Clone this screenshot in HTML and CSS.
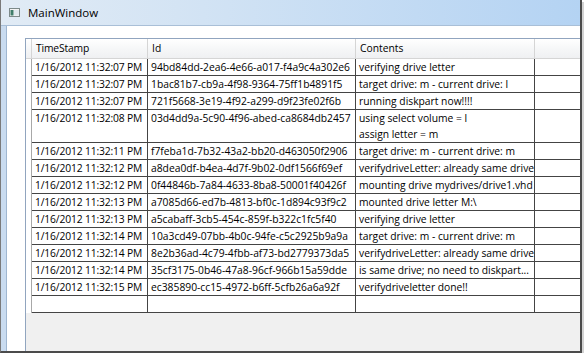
FILE: index.html
```html
<!DOCTYPE html>
<html lang="en">
<head>
  <meta charset="UTF-8">
  <title>MainWindow</title>
  <link rel="stylesheet" href="styles.css">
</head>
<body>

  <div class="window">
    <div class="titlebar">
      <svg class="app-icon" width="11" height="9" viewBox="0 0 11 9">
        <rect x="0.5" y="0.5" width="10" height="8" fill="#f4f4f4" stroke="#7d8a8a"/>
        <rect x="1.5" y="2" width="3" height="5.5" fill="#3f7d6b"/>
        <rect x="5" y="2" width="5" height="5.5" fill="#dfe8ee"/>
      </svg>
      <span class="title">MainWindow</span>
    </div>

    <div class="body">
      <div class="frame"></div>
      <div class="client">
        <div class="grid">
          <div class="row head">
            <div class="cell rh"></div>
            <div class="cell">TimeStamp</div>
            <div class="cell">Id</div>
            <div class="cell">Contents</div>
            <div class="cell fill"></div>
          </div>
          <div id="rows"></div>
        </div>
      </div>
    </div>
  </div>

  <script>
    const log = [
      ['1/16/2012 11:32:07 PM', '94bd84dd-2ea6-4e66-a017-f4a9c4a302e6', 'verifying drive letter'],
      ['1/16/2012 11:32:07 PM', '1bac81b7-cb9a-4f98-9364-75ff1b4891f5', 'target drive: m - current drive: l'],
      ['1/16/2012 11:32:07 PM', '721f5668-3e19-4f92-a299-d9f23fe02f6b', 'running diskpart now!!!!'],
      ['1/16/2012 11:32:08 PM', '03d4dd9a-5c90-4f96-abed-ca8684db2457', 'using select volume = l\nassign letter = m'],
      ['1/16/2012 11:32:11 PM', 'f7feba1d-7b32-43a2-bb20-d463050f2906', 'target drive: m - current drive: m'],
      ['1/16/2012 11:32:12 PM', 'a8dea0df-b4ea-4d7f-9b02-0df1566f69ef', 'verifydriveLetter: already same drive'],
      ['1/16/2012 11:32:12 PM', '0f44846b-7a84-4633-8ba8-50001f40426f', 'mounting drive mydrives/drive1.vhd'],
      ['1/16/2012 11:32:13 PM', 'a7085d66-ed7b-4813-bf0c-1d894c93f9c2', 'mounted drive letter M:\\'],
      ['1/16/2012 11:32:13 PM', 'a5cabaff-3cb5-454c-859f-b322c1fc5f40', 'verifying drive letter'],
      ['1/16/2012 11:32:14 PM', '10a3cd49-07bb-4b0c-94fe-c5c2925b9a9a', 'target drive: m - current drive: m'],
      ['1/16/2012 11:32:14 PM', '8e2b36ad-4c79-4fbb-af73-bd2779373da5', 'verifydriveLetter: already same drive'],
      ['1/16/2012 11:32:14 PM', '35cf3175-0b46-47a8-96cf-966b15a59dde', 'is same drive; no need to diskpart...'],
      ['1/16/2012 11:32:15 PM', 'ec385890-cc15-4972-b6ff-5cfb26a6a92f', 'verifydriveletter done!!'],
      ['', '', '']
    ];

    const rows = document.getElementById('rows');
    log.forEach(entry => {
      const row = document.createElement('div');
      row.className = 'row';
      row.innerHTML = '<div class="cell rh"></div>';
      entry.forEach(value => {
        const cell = document.createElement('div');
        cell.className = 'cell';
        cell.innerText = value;
        row.appendChild(cell);
      });
      row.insertAdjacentHTML('beforeend', '<div class="cell fill"></div>');
      rows.appendChild(row);
    });
  </script>

</body>
</html>
```

FILE: styles.css
```css
body {
  margin: 0;
  background: #fff;
  font-family: 'Open Sans', 'Noto Sans', sans-serif;
  color: #000;
}
.window {
  width: 579px;
  height: 351px;
  border-left: 1px solid #7a7a7a;
  border-right: 2px solid #4b4b4b;
  border-bottom: 2px solid #4b4b4b;
  box-shadow: 2px 2px 0 #d2d2d2;
  display: flex;
  flex-direction: column;
}
.titlebar {
  height: 25px;
  border-bottom: 1px solid #a9bfd7;
  background: linear-gradient(to right, #e1ebf5, #d2e3f4 35%, #b4d3f3);
  display: flex;
  align-items: center;
  gap: 8px;
  padding-left: 8px;
}
.title {
  font-size: 11.5px;
}
.body {
  flex: 1;
  display: flex;
  min-height: 0;
}
.frame {
  width: 5px;
  background: #c9dbef;
  border-right: 1px solid #9fb6d0;
}
.client {
  flex: 1;
  min-width: 0;
  display: flex;
  background: #fff;
  padding: 12px 0 0 18px;
}
.grid {
  flex: 1;
  min-width: 0;
  overflow: hidden;
  border-top: 1px solid #91a5bf;
  border-left: 1px solid #91a5bf;
  background: #f0f0f0;
  font-size: 10.3px;
}
.row {
  display: grid;
  grid-template-columns: 6px 116px 208px 179px 1fr;
}
.cell {
  box-sizing: border-box;
  min-height: 17px;
  line-height: 16px;
  padding-left: 3px;
  white-space: pre;
  overflow: hidden;
  background: #fff;
  border-right: 1px solid #444;
  border-bottom: 1px solid #444;
}
.row .cell:nth-child(2) {
  letter-spacing: -0.15px;
}
.cell.rh {
  padding: 0;
  border-bottom: none;
  border-right-color: #a8a8a8;
}
.cell.fill {
  border-right: none;
}
.head {
  height: 20px;
}
.head .cell {
  height: 20px;
  line-height: 19px;
  padding-left: 4px;
  letter-spacing: 0;
  background: linear-gradient(#fff, #f6f7f8 50%, #eff0f2);
  border-right-color: #d5d5d5;
  border-bottom: 1px solid #d5d5d5;
}
.head .cell.rh {
  border-bottom: 1px solid #d5d5d5;
}
```
